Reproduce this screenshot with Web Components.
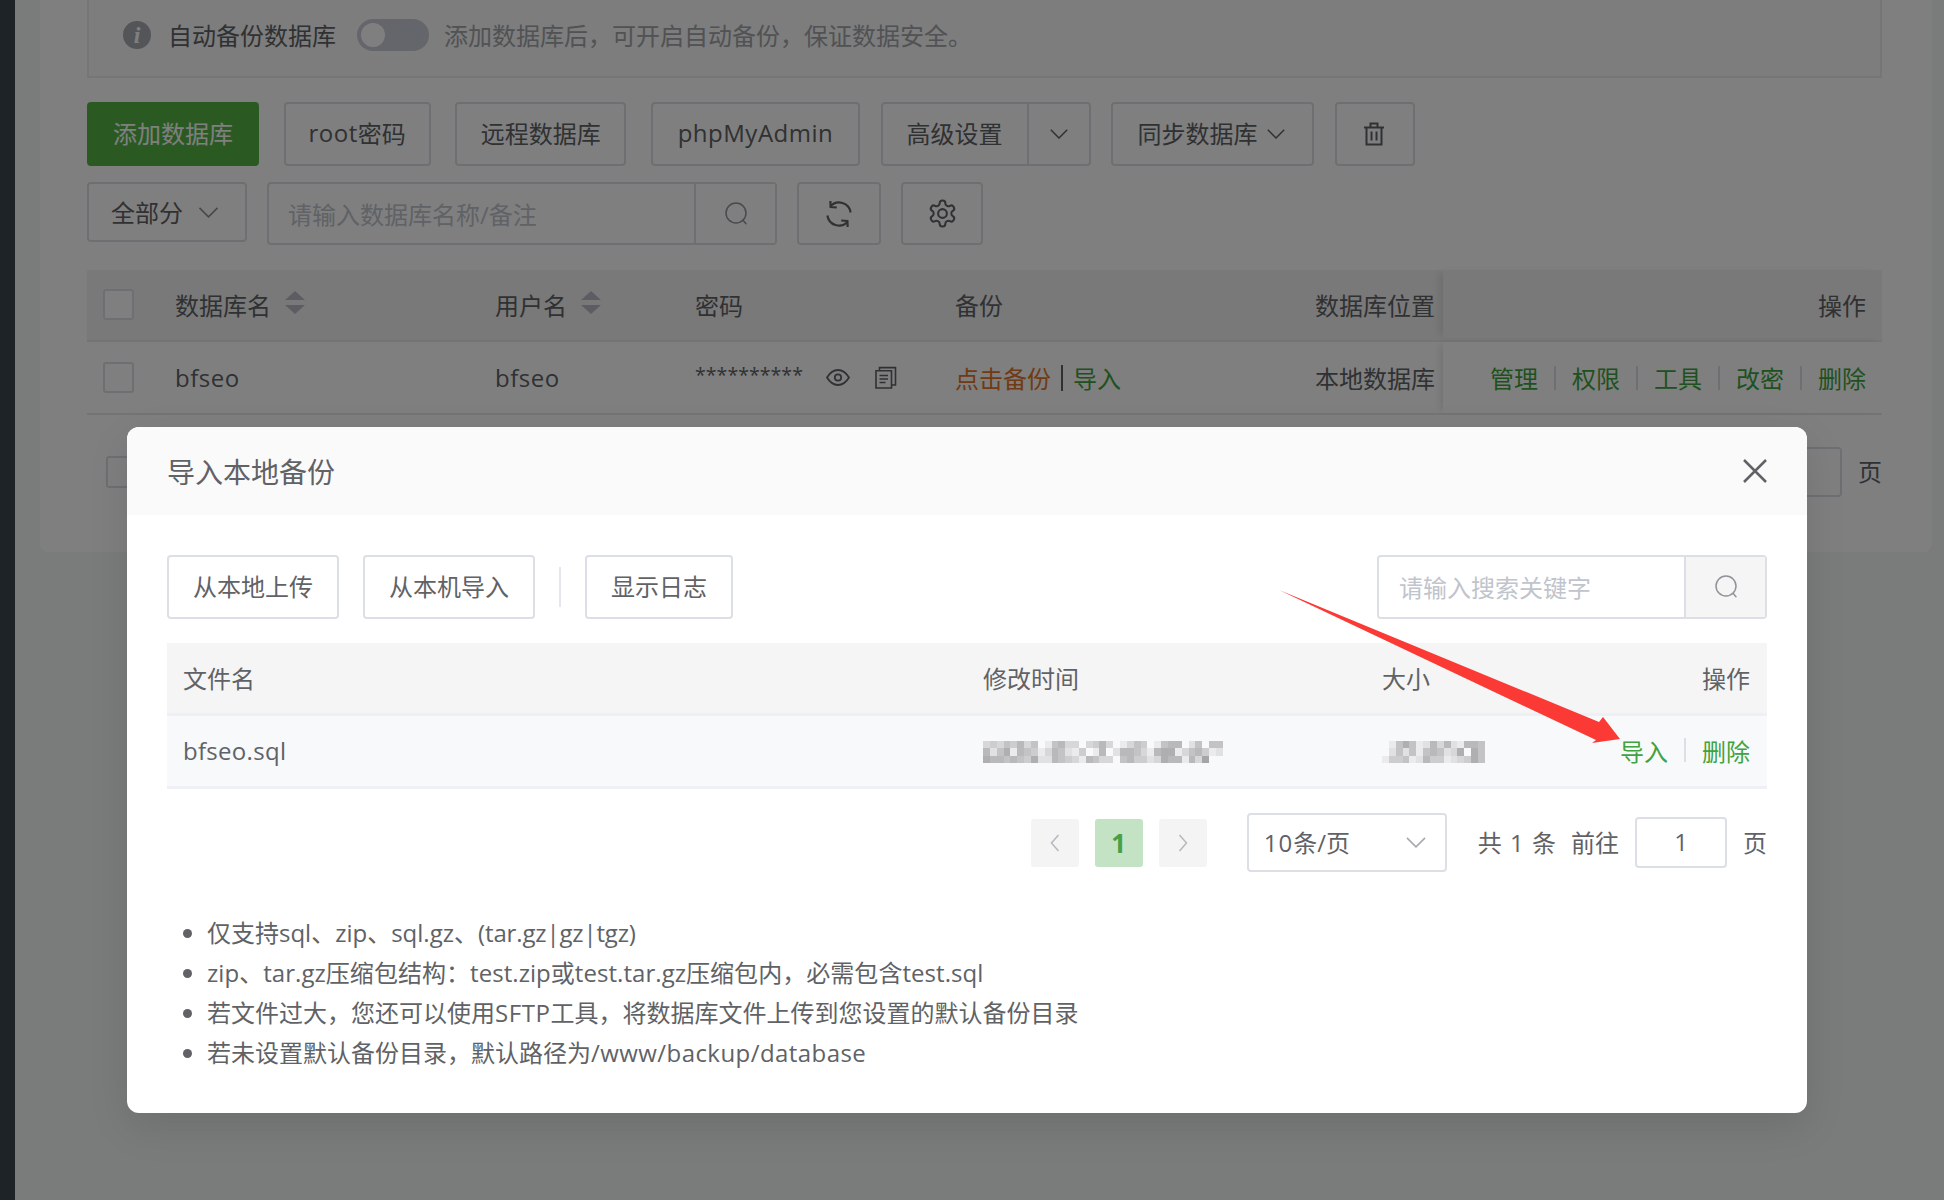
<!DOCTYPE html>
<html lang="zh-CN"><head><meta charset="utf-8"><title>数据库</title>
<style>
html,body{margin:0;padding:0;height:1200px;overflow:hidden;background:#f4f7f6}
body{font-family:"Open Sans","Noto Sans CJK SC",sans-serif;font-size:24px;color:#606266}
</style></head><body>
<x-page></x-page>
<script>
const FONT='font-family:"Open Sans","Noto Sans CJK SC",sans-serif;';
const ICONS={
search:'<svg viewBox="0 0 24 24" fill="none" stroke="currentColor" stroke-width="1.5"><circle cx="12" cy="11" r="10"/><path d="M19.200 18.500l2.800 3.300" stroke-linecap="round"/></svg>',
chev:'<svg viewBox="0 0 18 10" fill="none" stroke="currentColor" stroke-width="1.5"><path d="M.8.8L9 9l8.2-8.2"/></svg>',
lchev:'<svg viewBox="0 0 10 18" fill="none" stroke="currentColor" stroke-width="1.5"><path d="M8.5 1L1.5 9l7 8"/></svg>',
rchev:'<svg viewBox="0 0 10 18" fill="none" stroke="currentColor" stroke-width="1.5"><path d="M1.5 1l7 8-7 8"/></svg>',
trash:'<svg viewBox="0 0 22 24" fill="none" stroke="currentColor" stroke-width="2"><path d="M1 5.500h20M7.500 5V1.500h7V5M3.500 5.500V22.500h15V5.500M8.500 9.500v9M13.500 9.500v9"/></svg>',
refresh:'<svg viewBox="0 0 28 28" fill="none" stroke="currentColor" stroke-width="2.2"><path d="M25.600 12.500A11.700 11.700 0 0 0 5.400 6.200"/><path d="M10.800 7.500l-6.200-.5-.2-6" transform="translate(1 0)"/><path d="M2.400 15.500A11.700 11.700 0 0 0 22.600 21.800"/><path d="M17.200 20.500l6.200.5.2 6" transform="translate(-1 0)"/></svg>',
gear:'<svg viewBox="0 0 24 24" fill="none" stroke="currentColor" stroke-width="1.6"><path d="M12.220 2h-.44a2 2 0 0 0-2 2v.18a2 2 0 0 1-1 1.730l-.43.25a2 2 0 0 1-2 0l-.15-.08a2 2 0 0 0-2.730.73l-.22.38a2 2 0 0 0 .73 2.730l.15.1a2 2 0 0 1 1 1.720v.51a2 2 0 0 1-1 1.740l-.15.09a2 2 0 0 0-.73 2.730l.22.38a2 2 0 0 0 2.730.73l.15-.08a2 2 0 0 1 2 0l.43.25a2 2 0 0 1 1 1.730V20a2 2 0 0 0 2 2h.44a2 2 0 0 0 2-2v-.18a2 2 0 0 1 1-1.730l.43-.25a2 2 0 0 1 2 0l.15.08a2 2 0 0 0 2.730-.73l.22-.39a2 2 0 0 0-.73-2.730l-.15-.08a2 2 0 0 1-1-1.740v-.5a2 2 0 0 1 1-1.740l.15-.09a2 2 0 0 0 .73-2.730l-.22-.38a2 2 0 0 0-2.730-.73l-.15.08a2 2 0 0 1-2 0l-.43-.25a2 2 0 0 1-1-1.730V4a2 2 0 0 0-2-2z"/><circle cx="12" cy="12" r="3.400"/></svg>',
eye:'<svg viewBox="0 0 24 17" fill="none" stroke="currentColor" stroke-width="1.800"><path d="M1 8.500C4 3.500 8 1 12 1s8 2.500 11 7.500C20 13.500 16 16 12 16S4 13.500 1 8.500z"/><circle cx="12" cy="8.500" r="3.200"/></svg>',
copy:'<svg viewBox="0 0 22 23" fill="none" stroke="currentColor" stroke-width="1.600"><path d="M1 4.800h15.500V22H1zM4.500 4.500V1.600h16V19h-3.500M4.500 9.500h8.500M4.500 13h8.500M4.500 16.500h6"/></svg>',
close:'<svg viewBox="0 0 24 24" fill="none" stroke="currentColor" stroke-width="2.500"><path d="M1 1l22 22M23 1L1 23"/></svg>'
};
function el(name,css,html,extra){
  class C extends HTMLElement{
    constructor(){super();const r=this.attachShadow({mode:'open'});
      r.innerHTML='<style>'+css+'</style>'+(typeof html==='function'?html(this):html);}
    connectedCallback(){if(extra)extra(this);}
  }
  customElements.define(name,C);
}
el('x-icon',':host{display:inline-flex;width:var(--s,24px);height:var(--h,var(--s,24px));color:inherit;flex:none}svg{width:100%;height:100%;display:block}','',
  h=>{h.shadowRoot.innerHTML=h.shadowRoot.querySelector('style').outerHTML+(ICONS[h.getAttribute('n')]||'');});
el('x-btn',`:host{display:inline-flex;box-sizing:border-box;height:64px;align-items:center;justify-content:center;border:2px solid #dcdfe6;border-radius:4px;background:#fff;color:#606266;font-size:24px;padding:0 24px var(--bp,3px);flex:none;white-space:nowrap;${FONT}}
:host([primary]){background:#54b444;border-color:#54b444;color:#fff}`,'<slot></slot>');
el('x-split-btn',`:host{display:inline-flex;box-sizing:border-box;height:64px;align-items:center;border:2px solid #dcdfe6;border-radius:4px;background:#fff;color:#606266;font-size:24px;flex:none;white-space:nowrap}
.t{padding:0 25px 3px 23px;box-sizing:border-box;display:flex;align-items:center;height:100%;border-right:2px solid #dcdfe6}
.c{flex:1;display:flex;justify-content:center;align-items:center;padding-right:1px}x-icon{--s:18px;--h:10px}`,
 '<span class="t"><slot></slot></span><span class="c"><x-icon n="chev"></x-icon></span>');
el('x-search',`:host{display:flex;box-sizing:border-box;height:var(--ih,64px);border:2px solid #dcdfe6;border-radius:4px;background:#fff;flex:none;width:var(--iw,300px)}
.p{flex:1;display:flex;align-items:center;padding:0 0 var(--pb,0) var(--ip,16px);color:#c0c4cc;font-size:24px;white-space:nowrap}
.a{width:var(--aw,78px);background:var(--ab,#fff);border-left:2px solid #dcdfe6;display:flex;align-items:center;justify-content:center;color:#909399}`,
 h=>'<span class="p"><slot></slot></span><span class="a"><x-icon n="search"></x-icon></span>');
el('x-check',':host{display:block;box-sizing:border-box;width:31px;height:31px;border:2px solid #dcdfe6;border-radius:3px;background:#fff}','');
el('x-toggle',`:host{display:block;width:72px;height:32px;border-radius:16px;background:#cbcdd6;position:relative;flex:none}
i{position:absolute;left:4px;top:4px;width:24px;height:24px;border-radius:50%;background:#fff}`,'<i></i>');
el('x-info',`:host{display:inline-flex;width:28px;height:28px;border-radius:50%;background:#a8aab3;align-items:center;justify-content:center;flex:none;color:#fff;font:italic 700 24px/28px "Liberation Serif",serif}`,'i');
el('x-sort',`:host{display:inline-flex;flex-direction:column;gap:5px;margin:-3px 0 0 14px;vertical-align:middle}
i{width:0;height:0;border:10px solid transparent;border-top:0;border-bottom:9px solid #b8bbc4}
i+i{border-bottom:0;border-top:9px solid #b8bbc4}`,'<i></i><i></i>');
el('x-sep',':host{display:inline-block;width:2px;height:var(--sh,24px);background:#dcdfe6;margin:0 16px;flex:none;vertical-align:middle}','');
el('x-blur',':host{display:block;filter:blur(.6px);flex:none;margin-top:var(--bm,4px)}svg{display:block}','',h=>{
  const rows=h.getAttribute('rows').split('|'),cell=+h.getAttribute('cell')||6.85,ch=+h.getAttribute('ch')||7.300;
  let s='';rows.forEach((r,y)=>[...r].forEach((c,x)=>{const v=+c;if(v){const g=245-v*10;s+=`<rect x="${x*cell}" y="${y*ch}" width="${cell}" height="${ch}" fill="rgb(${g},${g},${g+3})"/>`;}}));
  const w=rows[0].length*cell,H=rows.length*ch;
  h.shadowRoot.innerHTML=h.shadowRoot.querySelector('style').outerHTML+`<svg width="${w}" height="${H}" shape-rendering="crispEdges">${s}</svg>`;
});
/* background database panel */
el('x-alert',`:host{display:flex;align-items:center;box-sizing:border-box;height:78px;padding:0 0 7px 34px;background:#fafafa;border:2px solid #ececf0;border-top:0;color:#606266;font-size:24px;white-space:nowrap}
x-toggle{margin:0 15px 0 21px}x-info{margin-right:17px}.d{color:#a2a4a8}`,
 '<x-info></x-info><slot name="l"></slot><x-toggle></x-toggle><span class="d"><slot name="d"></slot></span>');
el('x-db-row',`:host{display:grid;grid-template-columns:88px 320px 200px 260px 360px 128px 439px;box-sizing:border-box;height:var(--rh,73px);padding-bottom:var(--rp,0);border-bottom:2px solid #e8e9ee;background:var(--rb,#fff);align-items:center;font-size:24px;color:#606266;white-space:nowrap;position:relative}
::slotted(*){display:flex;align-items:center;min-width:0}
::slotted([slot=ops]){justify-content:flex-end;padding-right:16px;height:100%;box-shadow:-6px 0 8px -3px rgba(0,0,0,.1);background:var(--rb,#fff)}
::slotted([slot=c0]){padding-left:16px}`,
 '<slot name="c0"></slot><slot name="c1"></slot><slot name="c2"></slot><slot name="c3"></slot><slot name="c4"></slot><slot name="c5"></slot><slot name="ops"></slot>');
el('x-link',':host{color:#3fa33f;white-space:nowrap;font-size:24px}:host([warn]){color:#e0752a}','<slot></slot>');
el('x-page',`:host{display:flex;width:1944px;height:1200px;position:relative;overflow:hidden;background:#f4f7f6;${FONT}}
aside{width:15px;background:#3d4650;flex:none}
main{flex:1;padding:0 12px 0 25px;min-width:0}
.card{background:#fff;box-sizing:border-box;height:552px;padding:0 50px 0 47px;border-radius:0 0 8px 8px}
.la{letter-spacing:.5px}
.r1{display:flex;margin-top:24px}.g1{display:flex;gap:24.670px}.g2{display:flex;gap:20.500px;margin-left:21.500px}
.r2{display:flex;align-items:flex-start;margin-top:16px}
.sel{display:flex;align-items:center;box-sizing:border-box;width:160px;height:60px;border:2px solid #dcdfe6;border-radius:4px;padding:0 0 2px 22px;gap:15px;color:#606266;margin-right:20px}
.sel x-icon{--s:21px;--h:11px;color:#909399;margin-top:2px}
.s1{--iw:510px;--ih:63px;--aw:79px;--ip:19px}
.ib{height:63px;justify-content:center;padding:0;margin-left:20px;--bp:0}
.ib x-icon{--s:28px;color:#606266}
.tb{margin-top:25px}
.pg{display:flex;align-items:center;justify-content:space-between;margin-top:32px;padding-left:19px}
.pg .i{box-sizing:border-box;width:100px;height:50px;border:2px solid #dcdfe6;border-radius:4px;margin-left:auto}
.pg span{margin-left:16px;padding-bottom:3px}
.pg x-check{height:32px}
.stars{font-size:19.600px;width:108px;display:inline-block;margin-top:-6px}
.eye{--s:24px;--h:17px;margin-left:23px;color:#606266}.cp{--s:22px;--h:23px;margin-left:25px;color:#606266}
.bar{margin:0 10px;width:2px;height:26px;background:#606266;display:inline-block}
.ov{position:absolute;inset:0;background:rgba(0,0,0,.5)}`,
`<aside></aside><main><div class="card">
<x-alert><span slot="l">自动备份数据库</span><span slot="d">添加数据库后，可开启自动备份，保证数据安全。</span></x-alert>
<div class="r1"><div class="g1"><x-btn primary style="width:172px">添加数据库</x-btn><x-btn style="width:147px"><span class="la">root</span>密码</x-btn><x-btn style="width:171px">远程数据库</x-btn><x-btn style="width:209px"><span class="la">phpMyAdmin</span></x-btn></div>
<div class="g2"><x-split-btn style="width:209.500px">高级设置</x-split-btn><x-btn style="width:203px;padding:0 24px 3px;justify-content:flex-start">同步数据库<x-icon n="chev" style="--s:18px;--h:10px;margin:3px 0 0 10px"></x-icon></x-btn><x-btn style="width:80px;padding:0 2px 0 0"><x-icon n="trash" style="--s:22px;--h:24px"></x-icon></x-btn></div></div>
<div class="r2"><div class="sel">全部分<x-icon n="chev"></x-icon></div><x-search class="s1">请输入数据库名称/备注</x-search>
<x-btn class="ib" style="width:84px"><x-icon n="refresh"></x-icon></x-btn><x-btn class="ib" style="width:82px"><x-icon n="gear" style="--s:31px"></x-icon></x-btn></div>
<div class="tb">
<x-db-row style="--rh:72px;--rp:2px;--rb:#f2f2f2">
<div slot="c0"><x-check></x-check></div><div slot="c1">数据库名<x-sort></x-sort></div><div slot="c2">用户名<x-sort></x-sort></div><div slot="c3">密码</div><div slot="c4">备份</div><div slot="c5">数据库位置</div><div slot="ops">操作</div>
</x-db-row>
<x-db-row>
<div slot="c0"><x-check></x-check></div><div slot="c1"><span class="la">bfseo</span></div><div slot="c2"><span class="la">bfseo</span></div><div slot="c3"><span class="stars">**********</span><x-icon class="eye" n="eye"></x-icon><x-icon class="cp" n="copy"></x-icon></div>
<div slot="c4"><x-link warn>点击备份</x-link><i class="bar"></i><x-link>导入</x-link></div><div slot="c5">本地数据库</div>
<div slot="ops"><x-link>管理</x-link><x-sep></x-sep><x-link>权限</x-link><x-sep></x-sep><x-link>工具</x-link><x-sep></x-sep><x-link>改密</x-link><x-sep></x-sep><x-link>删除</x-link></div>
</x-db-row></div>
<div class="pg"><x-check></x-check><div class="i"></div><span>页</span></div>
</div></main>
<div class="ov"></div><x-dialog></x-dialog>`);
/* dialog */
el('x-file-row',`:host{display:grid;grid-template-columns:800px 399px 200px 1fr;box-sizing:border-box;align-items:center;padding:0 17px var(--rp,2px) 16px;height:var(--rh,73px);background:var(--rb,#f8f9fb);border-bottom:3px solid #eef0f5;white-space:nowrap;color:#606266}
::slotted([slot=o]){justify-self:end;display:flex;align-items:center}`,'<slot name="a"></slot><slot name="b"></slot><slot name="c"></slot><slot name="o"></slot>');
el('x-pgbtn',`:host{display:flex;width:48px;height:48px;border-radius:3px;background:#f4f4f5;align-items:center;justify-content:center;color:#b6b8bd;flex:none}
:host([on]){background:#c4e2c4;color:#47a047;font-weight:700;font-size:26px}`,'<slot></slot>');
el('x-notes',`:host{display:block;margin:41px 0 0;font-size:24px;line-height:40px;color:#606266}
ul{margin:0;padding:0 0 0 40px}`,'<ul><slot></slot></ul>');
el('x-dialog',`:host{position:absolute;left:127px;top:427px;width:1680px;height:686px;background:#fff;border-radius:12px;box-shadow:0 14px 40px rgba(0,0,0,.1);overflow:hidden;color:#606266;${FONT}display:block}
header{height:88px;background:#fafafa;display:flex;align-items:center;justify-content:space-between;padding:0 40px 0 40px;font-size:28px;box-sizing:border-box}
header x-icon{--s:24px;color:#606266}
.la{letter-spacing:.3px}
.b{padding:40px 40px 0 40px}
.t{display:flex;align-items:center}
.t x-btn{margin-right:24px;--bp:4px}
.t x-btn+x-btn{margin-right:0}
.v{width:2px;height:40px;background:#e4e6eb;margin:0 24px}
.q{margin-left:auto;--iw:390px;--aw:79px;--ab:#f5f5f5;--ip:20px;--pb:2px}
.tbl{margin-top:24px}
.pg{display:flex;align-items:center;justify-content:flex-end;margin-top:24px}
.sel{display:flex;align-items:center;justify-content:space-between;box-sizing:border-box;width:200px;height:59px;border:2px solid #dcdfe6;border-radius:4px;padding:0 19px 0 15px;margin:0 31px 0 40px}
.sel b{font-weight:400;letter-spacing:1px}
.sel x-icon{--s:20px;--h:11px;color:#a8abb2}
.pi{box-sizing:border-box;width:92px;height:51px;border:2px solid #dcdfe6;border-radius:4px;display:flex;align-items:center;justify-content:center;margin:0 16px 0 16px;padding-bottom:2px}
.pg>span,.sel span{padding-bottom:2px}
.pgg{display:flex;gap:16px}
.tot{word-spacing:2px;margin-right:15px}
x-pgbtn x-icon{--s:10px;--h:18px}
.arrow{position:absolute;left:0;top:0;pointer-events:none}`,
`<header><span>导入本地备份</span><x-icon n="close"></x-icon></header>
<div class="b">
<div class="t"><x-btn style="width:172px">从本地上传</x-btn><x-btn style="width:172px">从本机导入</x-btn><i class="v"></i><x-btn style="width:148px">显示日志</x-btn><x-search class="q">请输入搜索关键字</x-search></div>
<div class="tbl">
<x-file-row style="--rb:#f5f5f5"><div slot="a">文件名</div><div slot="b">修改时间</div><div slot="c">大小</div><div slot="o">操作</div></x-file-row>
<x-file-row><div slot="a"><span class="la">bfseo.sql</span></div><x-blur slot="b" rows="34354635015633034630135401566025055|62571654136521401602665316771356412|76656547226543165330564423766163800"></x-blur><x-blur slot="c" rows="015751263621665|025251565237075|144512644123475"></x-blur><div slot="o"><x-link>导入</x-link><x-sep></x-sep><x-link>删除</x-link></div></x-file-row>
</div>
<div class="pg"><div class="pgg"><x-pgbtn><x-icon n="lchev"></x-icon></x-pgbtn><x-pgbtn on>1</x-pgbtn><x-pgbtn><x-icon n="rchev"></x-icon></x-pgbtn></div>
<div class="sel"><span><b>10</b>条/页</span><x-icon n="chev"></x-icon></div>
<span class="tot">共 1 条</span><span>前往</span><div class="pi">1</div><span>页</span></div>
<x-notes><li>仅支持sql、zip、sql.gz、(<span style="letter-spacing:-.15px">tar.gz|gz|tgz</span>)</li><li style="letter-spacing:.05px">zip、tar.gz压缩包结构：test.zip或test.tar.gz压缩包内，必需包含test.sql</li><li>若文件过大，您还可以使用<span style="letter-spacing:.6px">SFTP</span>工具，将数据库文件上传到您设置的默认备份目录</li><li>若未设置默认备份目录，默认路径为<span style="letter-spacing:.43px">/www/backup/database</span></li></x-notes>
</div>
<svg class="arrow" width="1680" height="686" viewBox="127 427 1680 686"><path d="M1279 590L1599 722 1603 717 1620 739 1592 743 1596 740z" fill="#fb3935"/></svg>`);
</script>
</body></html>
